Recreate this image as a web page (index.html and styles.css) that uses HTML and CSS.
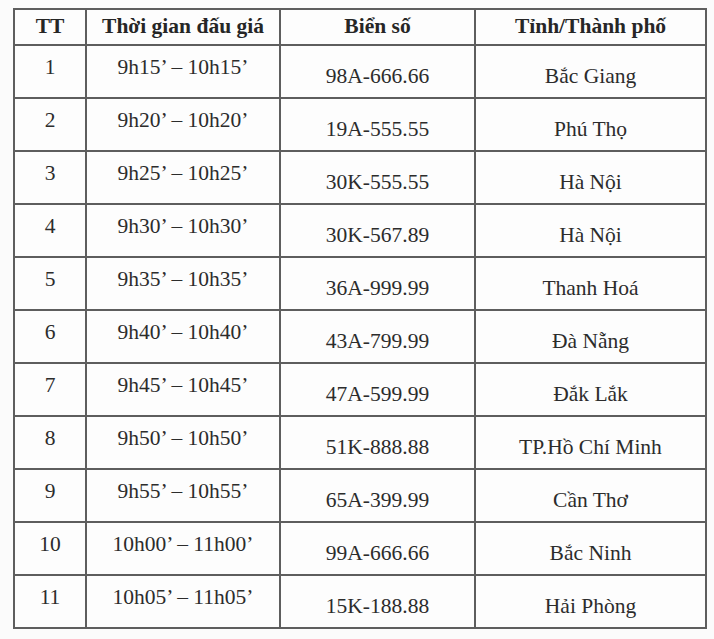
FILE: index.html
```html
<!DOCTYPE html>
<html lang="vi">
<head>
<meta charset="utf-8">
<title>Lịch đấu giá biển số</title>
<link rel="stylesheet" href="styles.css">
</head>
<body>
<table class="auction">
  <colgroup>
    <col class="c-tt">
    <col class="c-time">
    <col class="c-plate">
    <col class="c-city">
  </colgroup>
  <thead>
    <tr><th>TT</th><th>Thời gian đấu giá</th><th>Biển số</th><th>Tỉnh/Thành phố</th></tr>
  </thead>
  <tbody>
    <tr><td class="up">1</td><td class="up">9h15’ – 10h15’</td><td class="down">98A-666.66</td><td class="down">Bắc Giang</td></tr>
    <tr><td class="up">2</td><td class="up">9h20’ – 10h20’</td><td class="down">19A-555.55</td><td class="down">Phú Thọ</td></tr>
    <tr><td class="up">3</td><td class="up">9h25’ – 10h25’</td><td class="down">30K-555.55</td><td class="down">Hà Nội</td></tr>
    <tr><td class="up">4</td><td class="up">9h30’ – 10h30’</td><td class="down">30K-567.89</td><td class="down">Hà Nội</td></tr>
    <tr><td class="up">5</td><td class="up">9h35’ – 10h35’</td><td class="down">36A-999.99</td><td class="down">Thanh Hoá</td></tr>
    <tr><td class="up">6</td><td class="up">9h40’ – 10h40’</td><td class="down">43A-799.99</td><td class="down">Đà Nẵng</td></tr>
    <tr><td class="up">7</td><td class="up">9h45’ – 10h45’</td><td class="down">47A-599.99</td><td class="down">Đắk Lắk</td></tr>
    <tr><td class="up">8</td><td class="up">9h50’ – 10h50’</td><td class="down">51K-888.88</td><td class="down">TP.Hồ Chí Minh</td></tr>
    <tr><td class="up">9</td><td class="up">9h55’ – 10h55’</td><td class="down">65A-399.99</td><td class="down">Cần Thơ</td></tr>
    <tr><td class="up">10</td><td class="up">10h00’ – 11h00’</td><td class="down">99A-666.66</td><td class="down">Bắc Ninh</td></tr>
    <tr><td class="up">11</td><td class="up">10h05’ – 11h05’</td><td class="down">15K-188.88</td><td class="down">Hải Phòng</td></tr>
  </tbody>
</table>
</body>
</html>
```

FILE: styles.css
```css
html, body {
  margin: 0;
  padding: 0;
  background: #fbfbfb;
}

body {
  padding: 8px 0 0 13px;
  font-family: "Liberation Serif", "Times New Roman", serif;
  color: #2c2c2c;
}

.auction {
  border-collapse: collapse;
  table-layout: fixed;
  width: 692px;
  background: #fdfdfd;
  border: 2px solid #5a5a5a;
  font-size: 21.5px;
}

.c-tt { width: 72px; }
.c-time { width: 194px; }
.c-plate { width: 195px; }
.c-city { width: 231px; }

.auction th,
.auction td {
  border: 2px solid #5e5e5e;
  text-align: center;
  vertical-align: middle;
  padding: 0;
  white-space: nowrap;
  line-height: 1.15;
}

.auction th {
  height: 32px;
  font-weight: bold;
  padding-bottom: 2px;
  color: #262626;
}

.auction td {
  height: 42px;
}

.auction td.up {
  padding-bottom: 9px;
}

.auction td.down {
  padding-top: 9px;
}
```
